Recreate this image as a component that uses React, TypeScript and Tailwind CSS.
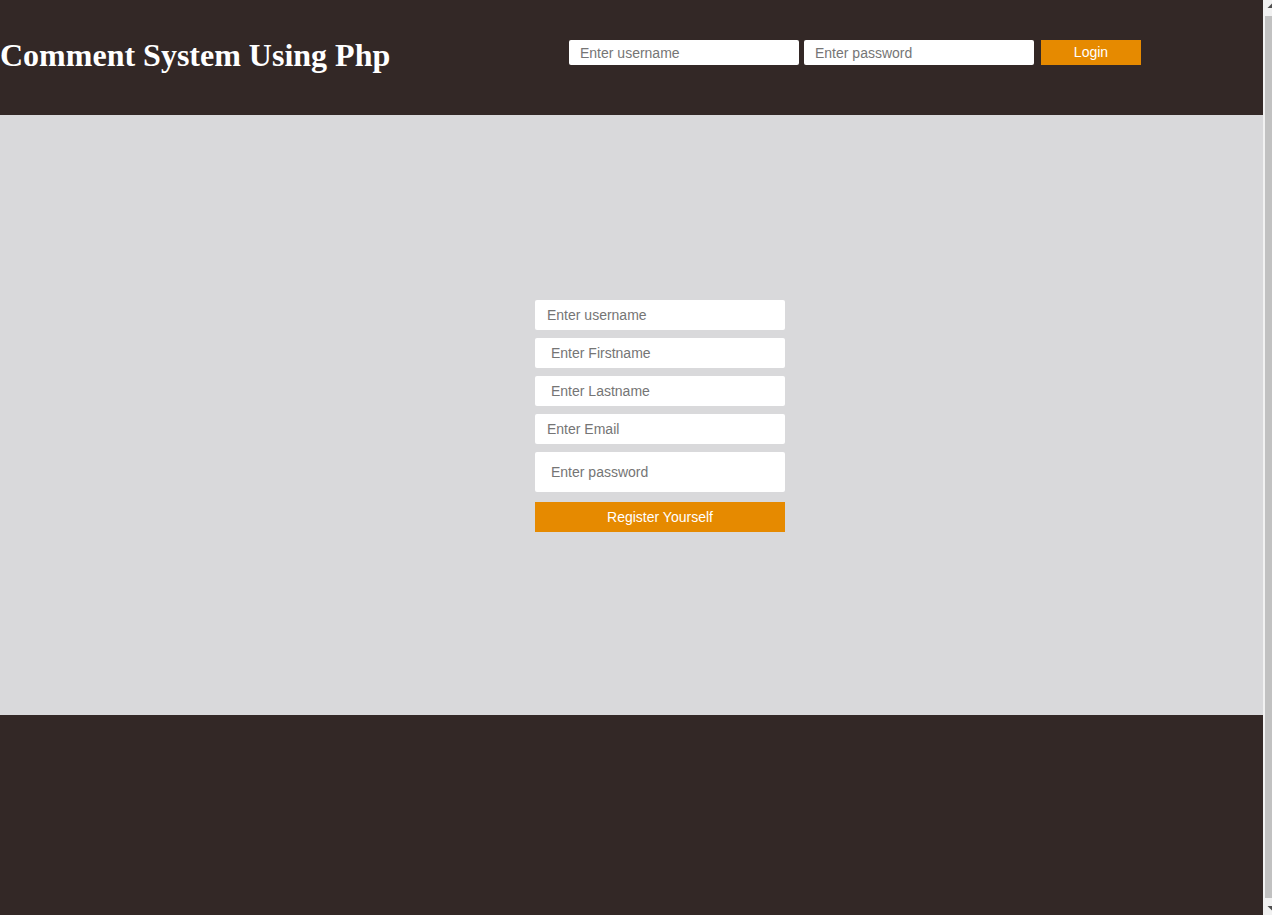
const sans = { fontFamily: '"Liberation Sans", Arial, sans-serif' }

const headerInput =
  'w-[230px] h-[25px] bg-white rounded-[2px] pl-[11px] text-[14px] text-gray-800 placeholder:text-[#757575] outline-none'

const formFields = [
  { placeholder: 'Enter username', type: 'text', pad: 'pl-3', h: 'h-[30px]' },
  { placeholder: 'Enter Firstname', type: 'text', pad: 'pl-4', h: 'h-[30px]' },
  { placeholder: 'Enter Lastname', type: 'text', pad: 'pl-4', h: 'h-[30px]' },
  { placeholder: 'Enter Email', type: 'email', pad: 'pl-3', h: 'h-[30px]' },
  { placeholder: 'Enter password', type: 'password', pad: 'pl-4', h: 'h-[40px]' },
]

function Scrollbar() {
  return (
    <aside className="w-[9px] shrink-0 bg-[#f1f1f1] flex flex-col">
      <svg width="9" height="16" className="shrink-0">
        <polygon points="4.5,8 13.5,8 9,3.5" fill="#505050" />
      </svg>
      <div className="ml-[2px] h-[882px] bg-[#c1c1c1]" />
      <svg width="9" height="17" className="shrink-0">
        <polygon points="4.5,8 13.5,8 9,12.5" fill="#505050" />
      </svg>
    </aside>
  )
}

export default function App() {
  return (
    <div className="h-[915px] overflow-hidden flex" style={sans}>
      <div className="w-[1263px] shrink-0 flex flex-col">
        <header className="h-[115px] shrink-0 bg-[#332826] flex items-start">
          <h1
            className="w-[569px] pt-[37px] text-[32px] leading-[37px] font-bold text-white"
            style={{ fontFamily: '"Liberation Serif", "Times New Roman", serif' }}
          >
            Comment System Using Php
          </h1>
          <form className="flex items-center pt-10" onSubmit={(e) => e.preventDefault()}>
            <input className={headerInput} placeholder="Enter username" />
            <input className={`${headerInput} ml-[5px]`} type="password" placeholder="Enter password" />
            <button className="ml-[7px] w-[100px] h-[25px] bg-[#e68a00] text-white text-[14px]">
              Login
            </button>
          </form>
        </header>

        <main className="h-[600px] shrink-0 bg-[#d9d9db] flex items-center pl-[535px] pt-[2px]">
          <form className="w-[250px] flex flex-col" onSubmit={(e) => e.preventDefault()}>
            <div className="flex flex-col gap-2">
              {formFields.map((f) => (
                <input
                  key={f.placeholder}
                  type={f.type}
                  placeholder={f.placeholder}
                  className={`w-full ${f.h} ${f.pad} bg-white rounded-[2px] text-[14px] text-gray-800 placeholder:text-[#757575] outline-none`}
                />
              ))}
            </div>
            <button className="mt-[10px] w-full h-[30px] bg-[#e68a00] text-white text-[14px]">
              Register Yourself
            </button>
          </form>
        </main>

        <footer className="h-[215px] shrink-0 bg-[#332826]" />
      </div>
      <Scrollbar />
    </div>
  )
}
